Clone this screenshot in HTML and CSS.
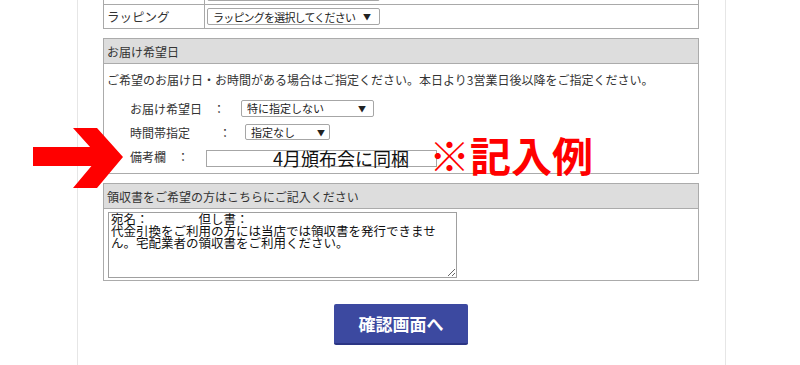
FILE: index.html
```html
<!DOCTYPE html>
<html lang="ja">
<head>
<meta charset="utf-8">
<title>お届け希望日</title>
<link rel="stylesheet" href="styles.css">
</head>
<body>
<div class="page">
  <div class="opt-table">
    <div class="cell cell-head"></div>
    <div class="cell"><div class="sel sel-top"></div></div>
    <div class="cell cell-head">ラッピング</div>
    <div class="cell"><div class="sel sel-top"><span class="tight">ラッピングを選択してください</span><span class="arr">▼</span></div></div>
  </div>

  <section class="box">
    <h2 class="box-head">お届け希望日</h2>
    <div class="box-body box-body-date">
      <p class="desc">ご希望のお届け日・お時間がある場合はご指定ください。本日より3営業日後以降をご指定ください。</p>
      <div class="frow">
        <span class="flabel">お届け希望日</span><span class="colon">：</span>
        <div class="sel sel-date"><span>特に指定しない</span><span class="arr">▼</span></div>
      </div>
      <div class="frow frow-time">
        <span class="flabel">時間帯指定</span><span class="colon">：</span>
        <div class="sel sel-time"><span>指定なし</span><span class="arr">▼</span></div>
      </div>
      <div class="frow frow-note">
        <span class="flabel">備考欄</span><span class="colon">：</span>
        <div class="note-input">4月頒布会に同梱</div>
      </div>
    </div>
  </section>

  <section class="box box-receipt">
    <h2 class="box-head">領収書をご希望の方はこちらにご記入ください</h2>
    <div class="box-body box-body-receipt">
      <textarea class="receipt" readonly>宛名：　　　　但し書：
代金引換をご利用の方には当店では領収書を発行できません。宅配業者の領収書をご利用ください。</textarea>
    </div>
  </section>

  <div class="actions">
    <button class="confirm" type="button">確認画面へ</button>
  </div>
</div>

<svg class="arrow" width="100" height="70" viewBox="0 0 100 70" aria-hidden="true">
  <rect x="3" y="22" width="66" height="19" fill="#ff0000"/>
  <polygon points="43,3 67,3 93,32 67,63 43,63 69,32" fill="#ff0000"/>
</svg>
<div class="note-label">※記入例</div>
</body>
</html>
```

FILE: styles.css
```css
* { box-sizing: border-box; }

html, body {
  margin: 0;
  padding: 0;
  background: #ffffff;
  height: 365px;
  overflow: hidden;
}

body {
  position: relative;
  font-family: "Noto Sans CJK JP", "Noto Sans", sans-serif;
  font-size: 12px;
  color: #333333;
}

.page {
  margin-left: 77px;
  width: 649px;
  min-height: 385px;
  border-left: 1px solid #e6e6e6;
  border-right: 1px solid #e6e6e6;
  padding-left: 25px;
}

/* top option table */
.opt-table {
  width: 596px;
  margin-top: -20px;
  display: grid;
  grid-template-columns: 101px 494px;
  border-top: 1px solid #a9a9a9;
  border-left: 1px solid #a9a9a9;
}

.cell {
  height: 24px;
  border-right: 1px solid #a9a9a9;
  border-bottom: 1px solid #a9a9a9;
  display: flex;
  align-items: center;
  padding-left: 2px;
}

.cell-head {
  padding-left: 3px;
  font-size: 12.5px;
}

.sel {
  height: 17px;
  border: 1px solid #a6a6a6;
  border-radius: 2px;
  background: #ffffff;
  display: flex;
  align-items: center;
  justify-content: space-between;
  padding: 0 8px 0 5px;
  font-size: 11px;
  color: #222222;
  white-space: nowrap;
}

.sel .arr {
  font-size: 8px;
  color: #222222;
}

.sel .tight { letter-spacing: -0.8px; }

.sel-top { width: 173px; }
.sel-date { width: 133px; padding-right: 7px; }
.sel-time { width: 85px; height: 16px; padding-right: 4px; }

/* sections */
.box {
  width: 596px;
  margin-top: 9px;
  border: 1px solid #ababab;
}

.box-head {
  margin: 0;
  height: 25px;
  background: #dddddd;
  border-bottom: 1px solid #ababab;
  font-size: 12px;
  font-weight: normal;
  color: #333333;
  display: flex;
  align-items: center;
  padding-left: 3px;
}

.box-body-date {
  padding: 7px 0 5px 3px;
}

.desc {
  margin: 0;
  height: 18px;
  line-height: 18px;
}

.frow {
  height: 24px;
  display: flex;
  align-items: center;
  padding-left: 23px;
}

.desc + .frow { margin-top: 7px; }

.colon {
  display: inline-block;
  width: 12px;
  text-align: center;
  margin-left: 11px;
  margin-right: 16px;
}

.frow-time .colon { margin-left: 29px; margin-right: 14px; }
.frow-note .colon { margin-right: 17px; }

.note-input {
  align-self: flex-end;
  margin-bottom: 1px;
  width: 231px;
  height: 17px;
  border: 1px solid #a6a6a6;
  background: #ffffff;
  font-size: 18px;
  line-height: 15px;
  color: #111111;
  padding-left: 66px;
  white-space: nowrap;
}

.box-body-receipt {
  padding: 3px 4px 2px 4px;
}

.receipt {
  display: block;
  width: 349px;
  height: 66px;
  margin: 0;
  border: 1px solid #a0a0a0;
  padding: 0 2px;
  font-family: "Noto Sans CJK JP", sans-serif;
  font-size: 12.5px;
  line-height: 12px;
  color: #111111;
  background: #ffffff;
  overflow: hidden;
}

/* button */
.actions {
  width: 596px;
  display: flex;
  justify-content: center;
  margin-top: 23px;
}

.confirm {
  width: 134px;
  height: 41px;
  border: none;
  border-bottom: 2px solid #2b3584;
  border-radius: 2px;
  background: #3c49a0;
  color: #ffffff;
  font-family: "Noto Sans CJK JP", sans-serif;
  font-size: 17px;
  font-weight: bold;
  padding: 0;
}

/* annotation overlays */
.arrow {
  position: absolute;
  left: 30px;
  top: 125px;
}

.note-label {
  position: absolute;
  left: 429px;
  top: 134px;
  font-size: 41px;
  line-height: 40px;
  font-weight: bold;
  color: #ff0000;
  white-space: nowrap;
}
```
